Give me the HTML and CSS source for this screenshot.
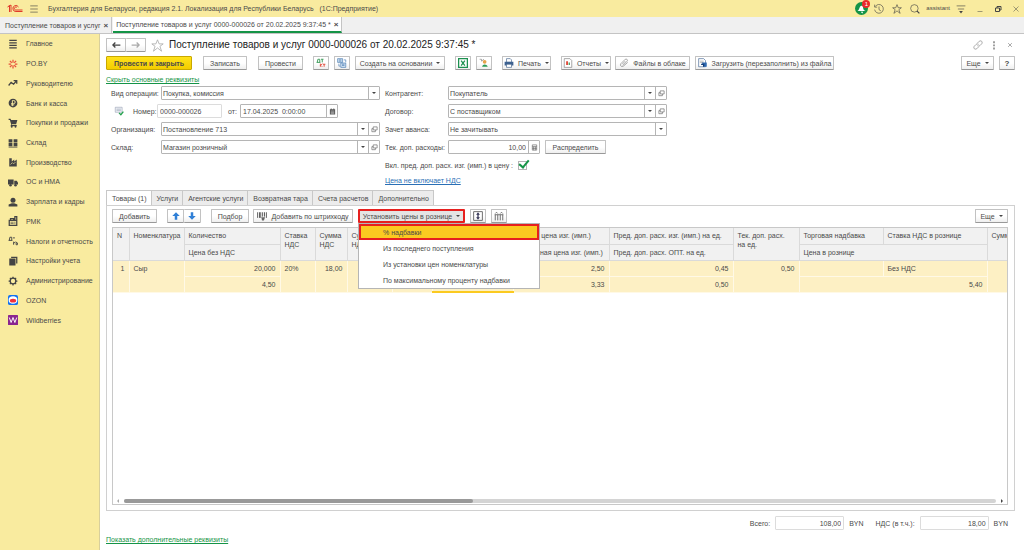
FILE: index.html
```html
<!DOCTYPE html>
<html lang="ru">
  <head>
    <meta charset="UTF-8" />
    <title>Поступление товаров и услуг</title>
    <link rel="stylesheet" href="styles.css">
  </head>
  <body>
    <header class="topbar">
      <svg class="logo" viewBox="0 0 32 18">
        <g fill="none" stroke="#e03a2a" stroke-width="2">
          <path d="M1 6l4-3v13M8 16V2L3 5" />
          <path d="M23 6a6 6 0 1 0-5 9h13" />
          <path d="M20 7a3 3 0 1 0-2 5h13" />
        </g>
      </svg>
      <button class="icon-btn burger" aria-label="Меню">
        <svg viewBox="0 0 16 16"><path class="line" d="M2 3h12M2 8h12M2 13h12" /></svg>
      </button>
      <span class="app-title">Бухгалтерия для Беларуси, редакция 2.1. Локализация для Республики Беларусь &nbsp; (1С:Предприятие)</span>
      <div class="top-tools">
        <button class="icon-btn bell" aria-label="Уведомления">
          <svg viewBox="0 0 16 16">
            <circle cx="8" cy="8" r="8" fill="#159447" />
            <path d="M3 11c2-1 2-3 3-5 1-2 4-2 4 1 0 2 1 3 3 4zM7 12h3l-1 2z" fill="#fff" />
          </svg>
          <span class="badge">1</span>
        </button>
        <button class="icon-btn" aria-label="История">
          <svg viewBox="0 0 16 16"><path class="line" d="M2 4a7 7 0 1 1-1 5M1 1v4h4M8 4v5l3 2" /></svg>
        </button>
        <button class="icon-btn" aria-label="Избранное">
          <svg viewBox="0 0 16 16"><path class="line" d="M8 1l2 5h5l-4 3 2 6-5-4-5 4 2-6-4-3h5z" /></svg>
        </button>
        <button class="icon-btn" aria-label="Поиск">
          <svg viewBox="0 0 16 16"><circle class="line" cx="7" cy="7" r="6" /><path class="line" stroke-width="2" d="M11 11l4 4" /></svg>
        </button>
        <span class="user">assistant</span>
        <button class="icon-btn" aria-label="Настройки">
          <svg viewBox="0 0 16 16"><path class="line" d="M1 3h14M3 8h10" /><path d="M5 11h6l-3 4z" fill="#444" /></svg>
        </button>
        <button class="icon-btn win" aria-label="Свернуть">
          <svg viewBox="0 0 16 16"><path class="line" d="M3 13h10" /></svg>
        </button>
        <button class="icon-btn win" aria-label="Развернуть">
          <svg viewBox="0 0 16 16"><path class="line" stroke-width="2" d="M3 6h8v7H3zM6 6V3h8v7h-3" /></svg>
        </button>
        <button class="icon-btn win" aria-label="Закрыть">
          <svg viewBox="0 0 16 16"><path class="line" d="M3 3l10 10M13 3L3 13" /></svg>
        </button>
      </div>
    </header>

    <div class="window-tabs">
      <div class="window-tab">Поступление товаров и услуг <button class="tab-close" aria-label="Закрыть вкладку">×</button></div>
      <div class="window-tab active">Поступление товаров и услуг 0000-000026 от 20.02.2025 9:37:45 * <button class="tab-close" aria-label="Закрыть вкладку">×</button></div>
    </div>

    <div class="layout">
      <aside class="sidebar">
        <nav class="side-nav">
          <a href="#"><svg viewBox="0 0 16 16"><path class="bold" d="M2 2h12M2 6h12M2 10h12M2 14h12" /></svg>Главное</a>
          <a href="#"><svg viewBox="0 0 16 16"><path d="M8 1v5M8 10v5M1 8h4M11 8h4M3 3l3 3M13 3l-3 3M3 13l3-3M13 13l-3-3" fill="none" stroke="#e8503a" stroke-width="2" /></svg>PO.BY</a>
          <a href="#"><svg viewBox="0 0 16 16"><path class="bold" d="M1 12l4-5 4 3 5-6M9 4h5v5" /></svg>Руководителю</a>
          <a href="#"><svg viewBox="0 0 16 16"><circle cx="8" cy="8" r="7" fill="#444" /><path d="M7 13V4h2a2 2 0 0 1 0 5H5M5 11h5" fill="none" stroke="#f9eb9f" stroke-width="1.5" /></svg>Банк и касса</a>
          <a href="#"><svg viewBox="0 0 16 16"><path d="M1 1h3l1 2h10l-2 7H6v1h8v2H4L5 10 3 3H1z" fill="#444" /><circle cx="6" cy="14" r="1.5" fill="#444" /><circle cx="12" cy="14" r="1.5" fill="#444" /></svg>Покупки и продажи</a>
          <a href="#"><svg viewBox="0 0 16 16"><path d="M1 2h6v5H1zM9 2h6v5H9zM1 8h6v5H1zM9 8h6v5H9zM1 14h14v1H1z" fill="#444" /></svg>Склад</a>
          <a href="#"><svg viewBox="0 0 16 16"><path d="M2 2h4v5l4-3v3l4-3v11H2z" fill="#444" /><path d="M4 12l3-3 2 2 3-3" fill="none" stroke="#f9eb9f" /></svg>Производство</a>
          <a href="#"><svg viewBox="0 0 16 16"><path d="M0 4h9v8H0zM10 6h4l2 3v3h-6z" fill="#444" /><circle cx="4" cy="13" r="2" fill="#444" /><circle cx="12" cy="13" r="2" fill="#444" /></svg>ОС и НМА</a>
          <a href="#"><svg viewBox="0 0 16 16"><circle cx="8" cy="5" r="4" fill="#444" /><path d="M1 15v-3l5-2h4l5 2v3z" fill="#444" /></svg>Зарплата и кадры</a>
          <a href="#"><svg viewBox="0 0 16 16"><path class="bold" d="M2 7h12v8H2zM4 7V4h5v3M11 7V1h3v6" /><path class="line" d="M4 10h5M4 12h5M11 9v4" /></svg>РМК</a>
          <a href="#"><svg viewBox="0 0 16 16"><path class="line" stroke-width="1.5" d="M2 7l1-5h3v5M1 7h6M8 3h3M9 9v5M9 12l3-3M13 10v4h2v-3z" /></svg>Налоги и отчетность</a>
          <a href="#"><svg viewBox="0 0 16 16"><path d="M5 1h10v11h-2V3H5zM2 4h10v11H2z" fill="#444" /></svg>Настройки учета</a>
          <a href="#"><svg viewBox="0 0 16 16"><circle cx="8" cy="8" r="4.5" fill="none" stroke="#444" stroke-width="2" /><path class="bold" d="M8 1v3M8 12v3M1 8h3M12 8h3M3 3l2 2M11 11l2 2M13 3l-2 2M5 11l-2 2" /></svg>Администрирование</a>
          <a href="#"><svg viewBox="0 0 16 16"><rect width="16" height="16" rx="3" fill="#1472f0" /><ellipse cx="8" cy="8" rx="7" ry="6" fill="#fff" /><ellipse cx="8" cy="9" rx="5" ry="3" fill="#f0303c" /></svg>OZON</a>
          <a href="#"><svg viewBox="0 0 16 16"><rect width="16" height="16" rx="1" fill="#8a2590" /><path d="M2 4l3 8 3-8 3 8 3-8" fill="none" stroke="#fff" stroke-width="1.5" /></svg>Wildberries</a>
        </nav>
      </aside>

      <main class="content">
        <div class="doc-header">
          <div class="btn-pair">
            <button class="btn" aria-label="Назад"><svg viewBox="0 0 16 16"><path class="bold" d="M15 8H3M7 4L3 8l4 4" /></svg></button>
            <button class="btn" aria-label="Вперед"><svg viewBox="0 0 16 16"><path class="pale" d="M1 8h12M9 4l4 4-4 4" /></svg></button>
          </div>
          <svg class="star" viewBox="0 0 16 16"><path d="M8 1l2 5h5l-4 3 2 6-5-4-5 4 2-6-4-3h5z" fill="none" stroke="#aaa" /></svg>
          <h1>Поступление товаров и услуг 0000-000026 от 20.02.2025 9:37:45 *</h1>
          <div class="doc-tools">
            <button class="icon-btn" aria-label="Ссылка"><svg viewBox="0 0 16 16"><path class="gray" d="M7 5l3-3c3-2 6 1 4 4l-3 3c-1 1-3 1-4 0M9 11l-3 3c-3 2-6-1-4-4l3-3c1-1 3-1 4 0" /></svg></button>
            <button class="icon-btn" aria-label="Еще"><svg viewBox="0 0 16 16"><path d="M7 2h2v3H7zM7 7h2v3H7zM7 12h2v3H7z" fill="#666" /></svg></button>
            <button class="icon-btn" aria-label="Закрыть"><svg viewBox="0 0 16 16"><path class="gray" d="M5 5l6 6M11 5l-6 6" /></svg></button>
          </div>
        </div>

        <div class="toolbar main-toolbar">
          <button class="btn primary">Провести и закрыть</button>
          <button class="btn save">Записать</button>
          <button class="btn post">Провести</button>
          <button class="btn square dtkt" aria-label="Дт Кт">
            <svg viewBox="0 0 16 16"><path d="M2 7l1-5h3v5M1 7h6M8 2h4M10 2v5" fill="none" stroke="#3a9a58" stroke-width="1.5" /><path d="M7 9v5M7 12l3-3M8 12l2 2M11 10h4M13 10v4" fill="none" stroke="#e04a3a" stroke-width="1.5" /></svg>
          </button>
          <button class="btn square" aria-label="Структура подчиненности">
            <svg viewBox="0 0 16 16"><path d="M1 1h8v6H1zM6 8h8v7H6z" fill="#d5e4f3" stroke="#3e73ad" /><path d="M3 3h4M3 5h4M8 10h4M8 12h4M11 3h3v4M3 9v4h2" fill="none" stroke="#3e73ad" /></svg>
          </button>
          <button class="btn based">Создать на основании <i class="caret"></i></button>
          <button class="btn square excel" aria-label="Excel">
            <svg viewBox="0 0 16 16"><rect x="1" y="1" width="14" height="14" fill="#fff" stroke="#1d9150" stroke-width="2" /><path d="M5 4l6 8M11 4l-6 8" stroke="#1d9150" stroke-width="2" /></svg>
          </button>
          <button class="btn square" aria-label="Проверка">
            <svg viewBox="0 0 16 16"><path class="gray" d="M1 2h3v3M4 5l4-3" /><circle cx="9" cy="6" r="3" fill="#e6a34b" /><path d="M5 14c1-5 7-5 9 0z" fill="#2c9b56" /></svg>
          </button>
          <button class="btn print">
            <svg viewBox="0 0 16 16"><path d="M4 1h6l2 2v4H4z" fill="#fff" stroke="#3d5f88" /><path d="M1 6h14v6H1z" fill="#3d6190" /><path d="M4 10h8v5H4z" fill="#fff" stroke="#3d5f88" /></svg>
            Печать <i class="caret"></i>
          </button>
          <button class="btn reports">
            <svg viewBox="0 0 16 16"><path d="M2 1h9l3 3v11H2z" fill="#fff" stroke="#777" /><path d="M5 5h3v6H5z" fill="#e04a3a" /><path d="M9 7h2v4H9z" fill="#3a9a58" /></svg>
            Отчеты <i class="caret"></i>
          </button>
          <button class="btn files">
            <svg viewBox="0 0 16 16"><path class="gray" d="M6 12l7-7c2-2-1-4-3-3L3 9c-2 3 1 6 4 4l7-6M5 10l5-5" /></svg>
            Файлы в облаке
          </button>
          <button class="btn load">
            <svg viewBox="0 0 16 16"><path d="M1 1h8l3 3v10H1z" fill="#fff" stroke="#3d6190" /><path d="M3 5h6M3 7h6" stroke="#999" /><path d="M6 7h8v7H9z" fill="#2f69b0" /><path d="M5 10h4v4" fill="none" stroke="#123d78" stroke-width="2" /></svg>
            Загрузить (перезаполнить) из файла
          </button>
          <button class="btn more">Еще <i class="caret"></i></button>
          <button class="btn help">?</button>
        </div>

        <a class="link" href="#">Скрыть основные реквизиты</a>

        <form class="details" autocomplete="off">
          <div class="col col-left">
            <div class="row">
              <label for="operation">Вид операции:</label>
              <div class="field"><select id="operation"><option>Покупка, комиссия</option></select><span class="drop"></span></div>
            </div>
            <div class="row number-row">
              <svg class="doc-icon" viewBox="0 0 16 16"><path d="M2 2h11v8H2z" fill="#eef1f6" stroke="#9aa4b5" /><path d="M4 5h7M4 7h7" stroke="#9aa4b5" /><path d="M8 11l3 3 4-5" fill="none" stroke="#22a04b" stroke-width="2" /></svg>
              <label for="number">Номер:</label>
              <div class="field number"><input id="number" type="text" value="0000-000026" /></div>
              <label for="date">от:</label>
              <div class="field date"><input id="date" type="text" value="17.04.2025  0:00:00" /><button type="button" class="side-btn" aria-label="Календарь"><svg viewBox="0 0 16 16"><path d="M2 3h12v12H2zM4 1h2v2H4zM10 1h2v2h-2z" fill="#555" /><path d="M4 7h8M4 10h8M4 13h8" stroke="#fff" /></svg></button></div>
            </div>
            <div class="row">
              <label for="org">Организация:</label>
              <div class="field"><select id="org"><option>Постановление 713</option></select><span class="drop"></span><button type="button" class="side-btn" aria-label="Открыть"><svg viewBox="0 0 16 16"><path class="open" d="M5 2h9v7H5zM5 6H2v7h8V9" /></svg></button></div>
            </div>
            <div class="row">
              <label for="store">Склад:</label>
              <div class="field"><select id="store"><option>Магазин розничный</option></select><span class="drop"></span><button type="button" class="side-btn" aria-label="Открыть"><svg viewBox="0 0 16 16"><path class="open" d="M5 2h9v7H5zM5 6H2v7h8V9" /></svg></button></div>
            </div>
          </div>
          <div class="col col-right">
            <div class="row">
              <label for="partner">Контрагент:</label>
              <div class="field"><select id="partner"><option>Покупатель</option></select><span class="drop"></span><button type="button" class="side-btn" aria-label="Открыть"><svg viewBox="0 0 16 16"><path class="open" d="M5 2h9v7H5zM5 6H2v7h8V9" /></svg></button></div>
            </div>
            <div class="row">
              <label for="contract">Договор:</label>
              <div class="field"><select id="contract"><option>С поставщиком</option></select><span class="drop"></span><button type="button" class="side-btn" aria-label="Открыть"><svg viewBox="0 0 16 16"><path class="open" d="M5 2h9v7H5zM5 6H2v7h8V9" /></svg></button></div>
            </div>
            <div class="row">
              <label for="advance">Зачет аванса:</label>
              <div class="field"><select id="advance"><option>Не зачитывать</option></select><span class="drop"></span></div>
            </div>
            <div class="row">
              <label for="costs">Тек. доп. расходы:</label>
              <div class="field costs"><input id="costs" class="num" type="text" value="10,00" /><button type="button" class="side-btn" aria-label="Калькулятор"><svg viewBox="0 0 16 16"><path class="open" d="M3 2h10v12H3zM3 6h10M6 6v8M10 6v8M3 10h10" /></svg></button></div>
              <button type="button" class="btn split">Распределить</button>
            </div>
            <div class="row">
              <label class="wide" for="include">Вкл. пред. доп. расх. изг. (имп.) в цену :</label>
              <input id="include" type="checkbox" checked />
            </div>
            <a class="link blue" href="#">Цена не включает НДС</a>
          </div>
        </form>

        <div class="tabs">
          <button class="tab active">Товары (1)</button>
          <button class="tab">Услуги</button>
          <button class="tab">Агентские услуги</button>
          <button class="tab">Возвратная тара</button>
          <button class="tab">Счета расчетов</button>
          <button class="tab">Дополнительно</button>
        </div>

        <section class="panel">
          <div class="toolbar table-toolbar">
            <button class="btn add">Добавить</button>
            <div class="btn-pair arrows">
              <button class="btn" aria-label="Вверх"><svg viewBox="0 0 16 16"><path d="M8 2l6 6h-4v6H6V8H2z" fill="#2f7fd6" /></svg></button>
              <button class="btn" aria-label="Вниз"><svg viewBox="0 0 16 16"><path d="M8 14l6-6h-4V2H6v6H2z" fill="#2f7fd6" /></svg></button>
            </div>
            <button class="btn pick">Подбор</button>
            <button class="btn barcode">
              <svg viewBox="0 0 16 16"><path d="M1 2v9M4 2v9M6 2v9M9 2v7M12 2v7M15 2v9" stroke="#555" stroke-width="1.5" /><path d="M7 10h6l-2 5H8z" fill="#666" /></svg>
              Добавить по штрихкоду
            </button>
            <div class="menu-wrap">
              <button class="btn prices">Установить цены в рознице <i class="caret"></i></button>
              <div class="menu" role="menu">
                <button class="menu-item selected" role="menuitem">% надбавки</button>
                <button class="menu-item" role="menuitem">Из последнего поступления</button>
                <button class="menu-item" role="menuitem">Из установки цен номенклатуры</button>
                <button class="menu-item" role="menuitem">По максимальному проценту надбавки</button>
              </div>
            </div>
            <button class="btn square" aria-label="Высота строк"><svg viewBox="0 0 16 16"><path class="open" d="M1 1h14v14H1z" /><path d="M8 2l3 4H9v4h2l-3 4-3-4h2V6H5z" fill="#335" /></svg></button>
            <button class="btn square" aria-label="Колонки"><svg viewBox="0 0 16 16"><path class="open" d="M1 6h14M2 6v9M6 6v9M10 6v9M14 6v9M2 4l2-2 2 2M10 4l2-2 2 2" /></svg></button>
            <button class="btn more">Еще <i class="caret"></i></button>
          </div>

          <div class="grid-box">
            <table class="goods">
              <colgroup>
                <col class="w-n"><col class="w-name"><col class="w-qty"><col class="w-rate"><col class="w-sum">
                <col class="w-sum2"><col class="w-total"><col class="w-maker"><col class="w-price"><col class="w-extra">
                <col class="w-cur"><col class="w-markup"><col class="w-retail"><col class="w-last">
              </colgroup>
              <thead>
                <tr>
                  <th rowspan="2">N</th>
                  <th rowspan="2">Номенклатура</th>
                  <th>Количество</th>
                  <th rowspan="2">Ставка НДС</th>
                  <th rowspan="2">Сумма НДС</th>
                  <th rowspan="2">Сумма<br>НДС</th>
                  <th rowspan="2"></th>
                  <th rowspan="2"></th>
                  <th>Оптов. цена изг. (имп.)</th>
                  <th>Пред. доп. расх. изг. (имп.) на ед.</th>
                  <th rowspan="2">Тек. доп. расх.<br>на ед.</th>
                  <th>Торговая надбавка</th>
                  <th>Ставка НДС в рознице</th>
                  <th rowspan="2">Сумма</th>
                </tr>
                <tr>
                  <th>Цена без НДС</th>
                  <th>Отпускная цена изг. (имп.)</th>
                  <th>Пред. доп. расх. ОПТ. на ед.</th>
                  <th colspan="2">Цена в рознице</th>
                </tr>
              </thead>
              <tbody>
                <tr>
                  <td rowspan="2" class="num">1</td>
                  <td rowspan="2">Сыр</td>
                  <td class="num">20,000</td>
                  <td rowspan="2">20%</td>
                  <td rowspan="2" class="num">18,00</td>
                  <td rowspan="2"></td>
                  <td rowspan="2"></td>
                  <td rowspan="2" class="current"></td>
                  <td class="num">2,50</td>
                  <td class="num">0,45</td>
                  <td rowspan="2" class="num">0,50</td>
                  <td></td>
                  <td>Без НДС</td>
                  <td rowspan="2"></td>
                </tr>
                <tr>
                  <td class="num">4,50</td>
                  <td class="num">3,33</td>
                  <td class="num">0,50</td>
                  <td colspan="2" class="num">5,40</td>
                </tr>
              </tbody>
            </table>
            <div class="scroll">
              <i class="scroll-left"></i>
              <div class="track"><div class="thumb"></div></div>
              <i class="scroll-right"></i>
            </div>
          </div>
        </section>

        <div class="totals">
          <label for="total">Всего:</label>
          <input id="total" class="num" type="text" value="108,00" readonly />
          <span>BYN</span>
          <label class="vat" for="vat">НДС (в т.ч.):</label>
          <input id="vat" class="num" type="text" value="18,00" readonly />
          <span>BYN</span>
        </div>

        <a class="link" href="#">Показать дополнительные реквизиты</a>
      </main>
    </div>
  </body>
</html>
```
FILE: styles.css
```css
* {
  box-sizing: border-box;
}
body {
  margin: 0;
  min-height: 100vh;
  display: flex;
  flex-direction: column;
  background: #fff;
  color: #4a4a4a;
  font-family: "Liberation Sans", Arial, sans-serif;
  font-size: 7px;
  line-height: 9px;
}
button,
input,
select {
  font: inherit;
  color: inherit;
  margin: 0;
}
svg {
  width: 10px;
  height: 10px;
  flex: none;
}
.line,
.bold,
.gray,
.open,
.pale {
  fill: none;
  stroke: #444;
}
.bold {
  stroke-width: 2;
}
.gray {
  stroke: #777;
}
.open {
  stroke: #666;
  stroke-width: 1.5;
}
.pale {
  stroke: #aaa;
  stroke-width: 2;
}
.icon-btn {
  display: flex;
  padding: 0;
  border: none;
  background: none;
  position: relative;
}

/* top bar */
.topbar {
  display: flex;
  align-items: center;
  height: 17px;
  padding: 0 4px 0 7px;
  background: #f9eb9f;
}
.logo {
  width: 16px;
  height: 9px;
}
.burger {
  margin: 0 9px 0 6px;
}
.top-tools {
  display: flex;
  align-items: center;
  gap: 8px;
  margin-left: auto;
}
.bell {
  margin-right: -2px;
}
.bell svg {
  width: 13px;
  height: 13px;
}
.badge {
  position: absolute;
  top: -2px;
  right: -2px;
  width: 8px;
  height: 8px;
  border-radius: 50%;
  background: #ea2a2a;
  color: #fff;
  font-size: 6px;
  line-height: 8px;
  text-align: center;
}
.user {
  margin: 0 -2px;
  font-size: 6px;
}
.win svg {
  width: 8px;
  height: 8px;
}
.win {
  margin-left: 2px;
}

/* open windows */
.window-tabs {
  display: flex;
  height: 17px;
  background: #f0f0f0;
  border-bottom: 1px solid #c4c4c4;
}
.window-tab {
  display: flex;
  align-items: center;
  gap: 3px;
  padding: 0 3px 0 5px;
  border-right: 1px solid #c4c4c4;
}
.window-tab.active {
  margin-left: 1px;
  padding: 0 3px;
  background: #fff;
  border-bottom: 2px solid #159447;
}
.tab-close {
  padding: 0;
  border: none;
  background: none;
  font-size: 8px;
  font-weight: bold;
}

.layout {
  flex: 1;
  display: flex;
}
.sidebar {
  flex: none;
  width: 100px;
  background: #f9eb9f;
  border-right: 1px solid #d8cf9c;
}
.side-nav {
  display: grid;
  grid-auto-rows: 1fr;
  height: 296px;
}
.side-nav a {
  display: flex;
  align-items: center;
  gap: 8px;
  padding-left: 8px;
  color: #4a4a4a;
  text-decoration: none;
  white-space: nowrap;
}
.content {
  flex: 1;
  min-width: 0;
  padding: 4px 9px 5px 6px;
}

/* buttons */
.btn {
  display: inline-flex;
  align-items: center;
  justify-content: center;
  gap: 4px;
  height: 14px;
  padding: 0 4px;
  border: 1px solid #c2c2c2;
  border-bottom-color: #999;
  border-radius: 1px;
  background: linear-gradient(#fff 50%, #efefef);
  white-space: nowrap;
}
.btn.primary {
  width: 86px;
  background: linear-gradient(#ffe21a, #f3cd00);
  border-color: #c9a800;
  font-weight: bold;
}
.btn.square {
  width: 16px;
  padding: 0;
}
.caret,
.drop::before {
  border: 2px solid transparent;
  border-top-color: #444;
  border-bottom: none;
}
.btn-pair {
  display: flex;
}
.btn-pair .btn {
  width: 20px;
  padding: 0;
}
.btn-pair .btn + .btn {
  border-left: none;
}

.doc-header {
  display: flex;
  align-items: center;
  height: 14px;
}
.star {
  width: 13px;
  height: 13px;
  margin: 0 5px 0 5px;
}
h1 {
  margin: 0;
  color: #222;
  font-size: 10px;
  font-weight: normal;
  line-height: 14px;
}
.doc-tools {
  display: flex;
  gap: 6px;
  margin-left: auto;
}
.toolbar {
  display: flex;
}
.main-toolbar {
  margin: 4px 0 5px;
}
.save {
  width: 44px;
  margin-left: 11px;
}
.post {
  width: 45px;
  margin-left: 11px;
}
.dtkt {
  margin: 0 5px 0 10px;
}
.based {
  width: 90px;
  margin-left: 5px;
}
.excel {
  margin: 0 5px 0 10px;
}
.print {
  width: 49px;
  margin-left: 10px;
}
.reports {
  width: 50px;
  margin-left: 10px;
}
.files {
  width: 75px;
  margin: 0 5px 0 4px;
}
.load {
  width: 139px;
}
.more {
  width: 33px;
  margin-left: auto;
}
.help {
  width: 16px;
  margin-left: 5px;
  font-weight: bold;
  font-size: 8px;
}
.link {
  display: block;
  color: #159447;
  text-decoration: underline;
}
.blue {
  color: #2a6fb5;
}

/* document details */
.details {
  display: flex;
  gap: 5px;
  margin: 2px 0 5px 5px;
}
.col {
  display: flex;
  flex-direction: column;
  gap: 4px;
}
.col-left {
  width: 269px;
}
.col-right {
  width: 282px;
}
.row {
  display: flex;
  align-items: center;
  height: 14px;
  white-space: nowrap;
}
.row label {
  width: 50px;
}
.col-right .row label {
  width: 63px;
}
.row .wide.wide {
  width: auto;
  margin-right: 5px;
}
.field {
  flex: 1;
  display: flex;
  height: 14px;
  border: 1px solid #b5b5b5;
  border-radius: 1px;
  background: #fff;
}
.field input,
.field select {
  flex: 1;
  min-width: 0;
  width: 0;
  padding: 0 2px;
  border: none;
  background: none;
  appearance: none;
}
.field select {
  padding: 0 1px;
}
.drop,
.side-btn {
  display: flex;
  align-items: center;
  justify-content: center;
  width: 11px;
  padding: 0;
  border: none;
  border-left: 1px solid #b5b5b5;
  background: none;
}
.drop::before {
  content: "";
}
.side-btn svg {
  width: 7px;
  height: 7px;
}
.doc-icon {
  margin: 0 9px 0 3px;
}
.row.number-row label {
  width: auto;
}
.field.number {
  flex: none;
  width: 65px;
  margin: 0 6px 0 auto;
  border-color: #dcdcdc;
}
.field.date {
  flex: none;
  width: 98px;
  margin: 0 42px 0 3px;
}
.field.costs {
  flex: none;
  width: 92px;
}
.num {
  text-align: right;
}
.split {
  width: 61px;
  margin-left: 5px;
}
input[type="checkbox"] {
  appearance: none;
  width: 9px;
  height: 9px;
  border: 1px solid #b5b5b5;
  position: relative;
}
input[type="checkbox"]:checked::after {
  content: "";
  position: absolute;
  left: 2px;
  bottom: 1px;
  width: 4px;
  height: 8px;
  border: solid #159447;
  border-width: 0 2px 2px 0;
  transform: rotate(40deg);
}

/* document tabs */
.tabs {
  display: flex;
}
.tab {
  height: 15px;
  padding: 0 4px 0 5px;
  border: 1px solid #c8c8c8;
  border-left: none;
  border-bottom: none;
  background: #ececec;
}
.tab.active {
  margin-bottom: -1px;
  border-left: 1px solid #c8c8c8;
  background: #fff;
}
.panel {
  padding: 3px 6px 5px 5px;
  border: 1px solid #d0d0d0;
}
.add {
  width: 45px;
}
.arrows {
  margin: 0 10px;
}
.arrows .btn {
  width: 17px;
}
.pick {
  width: 38px;
}
.barcode {
  width: 100px;
  margin: 0 5px 0 4px;
}
.menu-wrap {
  position: relative;
  margin-right: 5px;
}
.prices {
  width: 107px;
  border: 2px solid #e6201f;
  background: #e4e4e4;
}
.table-toolbar .square {
  margin-right: 5px;
}
.menu {
  position: absolute;
  z-index: 1;
  top: 14px;
  left: 0;
  width: 182px;
  border: 1px solid #b5b5b5;
  background: #fff;
}
.menu-item {
  display: block;
  width: 100%;
  height: 16px;
  padding: 0 24px;
  border: none;
  background: none;
  text-align: left;
}
.menu-item.selected {
  border: 2px solid #e6201f;
  padding: 0 22px;
  background: #fbca20;
}

/* goods table */
.grid-box {
  display: flex;
  flex-direction: column;
  height: 278px;
  margin-top: 4px;
  overflow: hidden;
  border: 1px solid #c8c8c8;
}
.goods {
  flex: none;
  width: 930px;
  table-layout: fixed;
  border-collapse: collapse;
}
th,
td {
  height: 16px;
  padding: 3px 4px;
  font-weight: normal;
  text-align: left;
  vertical-align: top;
}
th {
  background: #f1f1f1;
  border: 1px solid #dadada;
  border-top: none;
}
th:first-child,
td:first-child {
  border-left: none;
}
td {
  background: #fdf0c4;
  border: 1px solid #fff9e6;
}
td.num {
  text-align: right;
}
td.current {
  border-bottom: 2px solid #fbca20;
}
.w-n { width: 16px; }
.w-name { width: 55px; }
.w-qty { width: 96px; }
.w-rate { width: 35px; }
.w-sum { width: 32px; }
.w-sum2 { width: 45px; }
.w-total { width: 40px; }
.w-maker { width: 81px; }
.w-price { width: 96px; }
.w-extra { width: 124px; }
.w-cur { width: 66px; }
.w-markup { width: 84px; }
.w-retail { width: 104px; }
.w-last { width: 56px; }

.scroll {
  display: flex;
  align-items: center;
  gap: 5px;
  margin-top: auto;
  padding: 1px 4px;
}
.scroll-left,
.scroll-right {
  border: 2px solid transparent;
}
.scroll-left {
  border-right-color: #aaa;
  border-left: none;
}
.scroll-right {
  border-left-color: #444;
  border-right: none;
}
.track {
  flex: 1;
  height: 4px;
  border-radius: 2px;
  background: #d4d4d4;
}
.thumb {
  width: 40%;
  height: 4px;
  border-radius: 2px;
  background: #999;
}

.totals {
  display: flex;
  align-items: center;
  justify-content: flex-end;
  gap: 5px;
  margin: 5px 7px 5px 0;
}
.totals input {
  width: 69px;
  height: 14px;
  padding: 0 2px;
  border: 1px solid #dcdcdc;
  border-radius: 1px;
}
.vat {
  margin-left: 7px;
}
```
